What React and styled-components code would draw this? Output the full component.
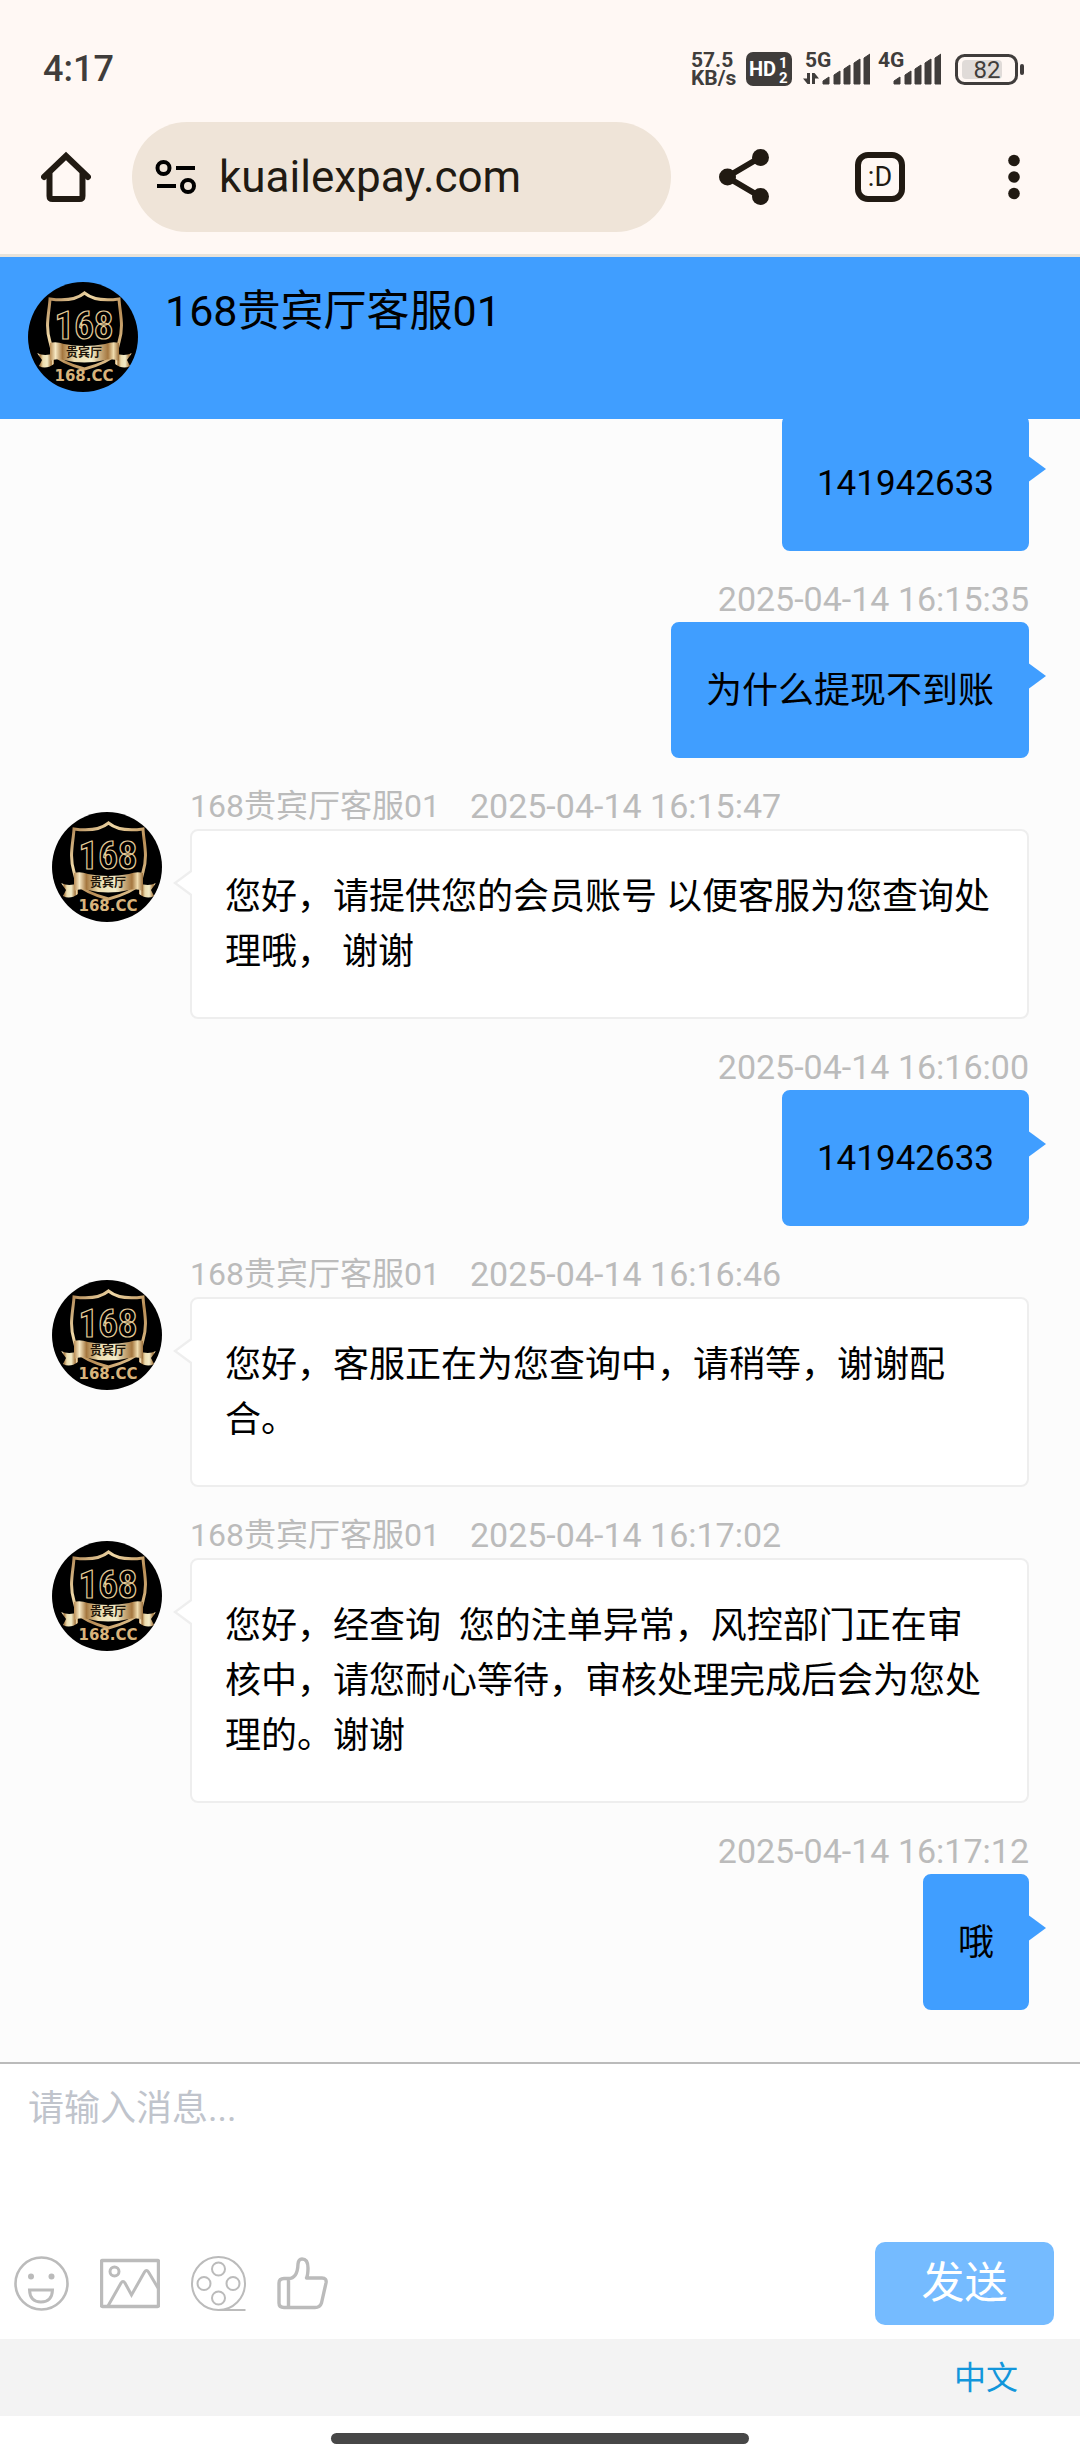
import { useState } from 'react';
import styled, { createGlobalStyle } from 'styled-components';

const GlobalStyle = createGlobalStyle`
  * {
    box-sizing: border-box;
  }
  body {
    margin: 0;
    background: #fff;
    font-family: Roboto, 'Noto Sans CJK SC', sans-serif;
  }
  button,
  input,
  textarea {
    margin: 0;
    padding: 0;
    border: none;
    outline: none;
    background: none;
    font-family: inherit;
  }
  svg {
    display: block;
    flex-shrink: 0;
  }
`;

const Page = styled.div`
  display: flex;
  flex-direction: column;
  height: 100vh;
`;

// 系统状态栏 + 浏览器地址栏
const BrowserTop = styled.header`
  flex-shrink: 0;
  background: #fff8f4;
  border-bottom: 3px solid #e8e3da;
`;
const StatusBar = styled.div`
  display: flex;
  align-items: center;
  justify-content: space-between;
  padding: 50px 56px 0 43px;
  height: 88px;
  color: #403d3b;
  .time {
    font-size: 36px;
    font-weight: 500;
    line-height: 38px;
  }
  .status {
    display: flex;
    align-items: center;
    gap: 8px;
  }
  .rate {
    width: 47px;
    font-size: 21px;
    font-weight: 700;
    line-height: 18px;
  }
`;
const Toolbar = styled.div`
  display: flex;
  align-items: center;
  padding: 34px 41px 22px;
  .actions {
    display: flex;
    gap: 84px;
    margin-left: 48px;
  }
`;
const IconButton = styled.button`
  display: flex;
  flex-shrink: 0;
  color: #211a12;
  cursor: pointer;
`;
const AddressBar = styled.label`
  flex: 1;
  min-width: 0;
  display: flex;
  align-items: center;
  gap: 22px;
  height: 110px;
  margin-left: 41px;
  padding: 0 23px;
  border-radius: 55px;
  background: #efe4d8;
  input {
    flex: 1;
    min-width: 0;
    height: 60px;
    font-size: 44px;
    color: #211a12;
  }
`;

const ChatHeader = styled.div`
  flex-shrink: 0;
  display: flex;
  align-items: flex-start;
  gap: 27px;
  padding: 25px 28px 27px;
  background: #409eff;
  h1 {
    margin: 0;
    font-size: 43px;
    font-weight: 400;
    line-height: 58px;
    color: #000;
  }
`;

// column-reverse 让列表默认停在最底部
const Scroller = styled.main`
  flex: 1;
  min-height: 0;
  display: flex;
  flex-direction: column-reverse;
  overflow-y: auto;
  scrollbar-width: none;
  background: #fcfcfc;
`;
const MessageList = styled.ul`
  display: flex;
  flex-direction: column;
  gap: 25px;
  margin: 0;
  padding: 0 51px 52px 52px;
  list-style: none;
`;
const MessageItem = styled.li`
  display: flex;
  gap: 28px;
  justify-content: ${({ $mine }) => ($mine ? 'flex-end' : 'flex-start')};
  > svg {
    margin-top: 29px;
  }
  .body {
    display: flex;
    flex-direction: column;
    align-items: ${({ $mine }) => ($mine ? 'flex-end' : 'stretch')};
    flex: ${({ $mine }) => ($mine ? 'none' : '1')};
    min-width: 0;
  }
`;
const Meta = styled.div`
  display: flex;
  align-items: center;
  gap: 30px;
  height: 46px;
  font-size: 32px;
  line-height: 46px;
  color: #bbb;
  time {
    font-size: 34px;
  }
`;
const Bubble = styled.div`
  position: relative;
  padding: 39px 33px 37px;
  border: 2px solid ${({ $mine }) => ($mine ? '#409eff' : '#eee')};
  border-radius: 8px;
  background: ${({ $mine }) => ($mine ? '#409eff' : '#fff')};
  font-size: ${({ $numeric }) => ($numeric ? '35px' : '36px')};
  line-height: ${({ $mine }) => ($mine ? '56px' : '55px')};
  white-space: pre-wrap;
  color: #000;
  &::before,
  &::after {
    content: '';
    position: absolute;
    border: 14px solid transparent;
  }
  &::before {
    top: 38px;
    ${({ $mine }) =>
      $mine
        ? 'left: 100%; border-left: 19px solid #409eff; border-right: none;'
        : 'right: 100%; border-right: 19px solid #eee; border-left: none;'}
  }
  &::after {
    display: ${({ $mine }) => ($mine ? 'none' : 'block')};
    top: 38px;
    right: calc(100% - 4px);
    border-right: 19px solid #fff;
    border-left: none;
  }
`;

const Composer = styled.form`
  flex-shrink: 0;
  border-top: 2px solid #bbb;
  background: #fff;
  textarea {
    display: block;
    width: 100%;
    height: 170px;
    padding: 17px 28px;
    font-size: 36px;
    line-height: 56px;
    color: #000;
    resize: none;
    &::placeholder {
      color: #c0c4cc;
    }
  }
`;
const Tools = styled.div`
  display: flex;
  align-items: center;
  justify-content: space-between;
  padding: 8px 26px 14px 14px;
  .icons {
    display: flex;
    align-items: center;
    gap: 31px;
  }
`;
const ToolButton = styled(IconButton)`
  color: #bbb;
`;
const SendButton = styled.button`
  width: 179px;
  height: 83px;
  border-radius: 10px;
  background: #75bbff;
  color: #fff;
  font-size: 43px;
  line-height: 83px;
  cursor: pointer;
`;
const LangBar = styled.div`
  flex-shrink: 0;
  display: flex;
  align-items: center;
  justify-content: flex-end;
  height: 77px;
  padding-right: 62px;
  background: #f3f3f3;
  a {
    font-size: 32px;
    line-height: 40px;
    color: #1296db;
    text-decoration: none;
  }
`;
const GestureBar = styled.footer`
  flex-shrink: 0;
  display: flex;
  justify-content: center;
  height: 44px;
  padding-top: 17px;
  background: #fff;
  &::before {
    content: '';
    width: 418px;
    height: 11px;
    border-radius: 6px;
    background: #474747;
  }
`;

const Avatar = () => (
  <svg width="110" height="110" viewBox="0 0 110 110" role="img" aria-label="168贵宾厅">
    <defs>
      <linearGradient id="gold" x1="0" y1="0" x2="1" y2="1">
        <stop offset="0" stopColor="#a87c4a" />
        <stop offset="0.3" stopColor="#f0d9a8" />
        <stop offset="0.6" stopColor="#b98d55" />
        <stop offset="1" stopColor="#ecd3a0" />
      </linearGradient>
      <linearGradient id="ribbon" x1="0" y1="0" x2="1" y2="0">
        <stop offset="0" stopColor="#b98d55" />
        <stop offset="0.08" stopColor="#f6e8c4" />
        <stop offset="0.18" stopColor="#a5773f" />
        <stop offset="0.35" stopColor="#ecdcae" />
        <stop offset="0.6" stopColor="#f3ecc8" />
        <stop offset="0.84" stopColor="#a5773f" />
        <stop offset="0.92" stopColor="#f0dcae" />
        <stop offset="1" stopColor="#9b6f3b" />
      </linearGradient>
    </defs>
    <circle cx="55" cy="55" r="55" fill="#000" />
    <path
      d="M56.500 11C48 18 36 19 22 17C21 32 17 44 22 60L25 72Q34 81 56.500 87Q79 81 88 72L91 60C96 44 92 32 91 17C77 19 65 18 56.500 11Z"
      fill="#000"
      stroke="url(#gold)"
      strokeWidth="3"
    />
    <path d="M9 71Q17 75 26 71V82Q18 88 11 84L14 78Z" fill="url(#ribbon)" />
    <path d="M104 71Q96 75 87 71V82Q95 88 102 84L99 78Z" fill="url(#ribbon)" />
    <path d="M22 61Q28 59 36 62Q56 66 77 62Q85 59 91 61V79Q84 76 77 78Q56 83 36 78Q28 76 22 79Z" fill="url(#ribbon)" />
    <path d="M50 81.500L56.500 84.500L63 81.500Z" fill="#000" />
    <text
      x="56"
      y="57"
      textAnchor="middle"
      fontFamily="'Liberation Sans Narrow', 'Roboto Condensed', sans-serif"
      fontWeight="700"
      fontSize="39"
      fill="#000"
      stroke="#e5cc98"
      strokeWidth="1.2"
    >
      168
    </text>
    <text x="56" y="75" textAnchor="middle" fontFamily="'Noto Sans CJK SC', sans-serif" fontWeight="700" fontSize="12" fill="#1c1408">
      贵宾厅
    </text>
    <text x="56" y="99" textAnchor="middle" fontFamily="'DejaVu Sans', sans-serif" fontWeight="700" fontSize="15" fill="#d8b47c">
      168.CC
    </text>
  </svg>
);

const bars = [
  [0, 8],
  [11, 14],
  [21, 20],
  [31, 26],
  [41, 31]
];
const Signal = ({ label, width, start, data }) => (
  <svg width={width} height="44" viewBox={`0 -4 ${width} 44`} fill="currentColor">
    <text x={data ? 5 : 0} y="16" fontSize="21" fontWeight="700">
      {label}
    </text>
    {bars.map(([x, h]) => (
      <path key={x} d={`M${start + x} 33V${38 - h}L${start + x + 6} ${34 - h}V33Z`} stroke="currentColor" strokeWidth="1" />
    ))}
    {data && <path d="M10 22V33H7.500L3 27.500H7V22ZM12 33V22H14.500L19 27.500H15V33Z" />}
  </svg>
);

const HdIcon = () => (
  <svg width="46" height="36" viewBox="0 0 46 36">
    <rect y="1" width="46" height="34" rx="7" fill="#403d3b" />
    <g fill="#fff" fontWeight="700">
      <text x="3" y="25" fontSize="20">
        HD
      </text>
      <text x="33" y="17" fontSize="15">
        1
      </text>
      <text x="33" y="32" fontSize="15">
        2
      </text>
    </g>
  </svg>
);

const Battery = () => (
  <svg width="75" height="36" viewBox="0 0 75 36">
    <rect x="7.500" y="4.500" width="60" height="28" rx="8" fill="none" stroke="#403d3b" strokeWidth="3" />
    <rect x="13" y="9" width="40" height="19" rx="4" fill="#e0dbd8" />
    <rect x="71" y="13" width="4" height="11" rx="2" fill="#403d3b" />
    <text x="38" y="27" textAnchor="middle" fontSize="24" fill="#403d3b">
      82
    </text>
  </svg>
);

const HomeIcon = () => (
  <svg width="50" height="54" viewBox="0 0 50 54" fill="none" stroke="currentColor" strokeWidth="6" strokeLinecap="round">
    <path d="M3 27L25 6L47 27" strokeLinejoin="miter" />
    <path d="M8.500 24V46Q8.500 49 11.500 49H38.500Q41.500 49 41.500 46V24" />
  </svg>
);

const SiteIcon = () => (
  <svg width="42" height="36" viewBox="0 0 42 36" fill="none" stroke="currentColor" strokeWidth="4">
    <circle cx="8.500" cy="9" r="6" />
    <path d="M21 9H40M2 27H21" />
    <circle cx="33" cy="27" r="6" />
  </svg>
);

const ShareIcon = () => (
  <svg width="50" height="56" viewBox="0 0 50 56" fill="currentColor">
    <path d="M41 8.500L8 28L41 47.500" fill="none" stroke="currentColor" strokeWidth="6" />
    <circle cx="41.500" cy="8.500" r="8.500" />
    <circle cx="8.500" cy="28" r="8.500" />
    <circle cx="41.500" cy="47.500" r="8.500" />
  </svg>
);

const TabsIcon = () => (
  <svg width="52" height="56" viewBox="0 0 52 56">
    <rect x="5" y="6" width="44" height="44" rx="10" fill="none" stroke="currentColor" strokeWidth="6" />
    <text x="27" y="37" textAnchor="middle" fontSize="27" fill="currentColor">
      :D
    </text>
  </svg>
);

const MoreIcon = () => (
  <svg width="50" height="56" viewBox="0 0 50 56" fill="currentColor">
    <circle cx="25" cy="11.500" r="5.800" />
    <circle cx="25" cy="28" r="5.800" />
    <circle cx="25" cy="44.500" r="5.800" />
  </svg>
);

const SmileIcon = () => (
  <svg width="55" height="55" viewBox="0 0 55 55" fill="none" stroke="currentColor" strokeWidth="3">
    <circle cx="27.500" cy="27.500" r="26" strokeWidth="2.600" />
    <path d="M15.500 34H38.500Q38 46 27 46Q16 46 15.500 34Z" />
    <circle cx="17" cy="20.500" r="3" fill="currentColor" stroke="none" />
    <circle cx="37.500" cy="20.500" r="3" fill="currentColor" stroke="none" />
  </svg>
);

const PictureIcon = () => (
  <svg width="60" height="55" viewBox="0 0 60 55" fill="none" stroke="currentColor" strokeWidth="3">
    <rect x="1.500" y="4.500" width="57" height="46" rx="1" strokeWidth="3.400" />
    <circle cx="14.500" cy="15.500" r="4.500" />
    <path d="M8 50L21 27Q23 24 25 27L31.500 39L44.500 16Q46.500 13 48.500 16L58 32" />
  </svg>
);

const FilmIcon = () => (
  <svg width="55" height="55" viewBox="0 0 55 55" fill="none" stroke="currentColor" strokeWidth="2">
    <circle cx="27.500" cy="27.500" r="26.500" />
    <path d="M27.500 54H54.500" />
    <circle cx="27.500" cy="13" r="6.500" />
    <circle cx="13" cy="27.500" r="6.500" />
    <circle cx="42" cy="27.500" r="6.500" />
    <circle cx="27.500" cy="42" r="6.500" />
  </svg>
);

const ThumbIcon = () => (
  <svg width="51" height="55" viewBox="0 0 51 55" fill="none" stroke="currentColor" strokeWidth="3.400" strokeLinejoin="round">
    <path d="M11.500 22.500H7Q2 22.500 2 27V47Q2 51.500 7 51.500H38Q43 51.500 44.500 47L49 27Q50 22 45 22H29.500Q31 19 31 12Q31 3 25 3Q21.500 3 21 8Q20.500 22.500 11.500 22.500V51.500" />
  </svg>
);

const agent = '168贵宾厅客服01';
const messages = [
  { id: 1, mine: true, text: '141942633' },
  { id: 2, mine: true, time: '2025-04-14 16:15:35', text: '为什么提现不到账' },
  { id: 3, time: '2025-04-14 16:15:47', text: '您好，请提供您的会员账号 以便客服为您查询处理哦， 谢谢' },
  { id: 4, mine: true, time: '2025-04-14 16:16:00', text: '141942633' },
  { id: 5, time: '2025-04-14 16:16:46', text: '您好，客服正在为您查询中，请稍等，谢谢配合。' },
  {
    id: 6,
    time: '2025-04-14 16:17:02',
    text: '您好，经查询  您的注单异常，风控部门正在审核中，请您耐心等待，审核处理完成后会为您处理的。谢谢'
  },
  { id: 7, mine: true, time: '2025-04-14 16:17:12', text: '哦' }
];

const Message = ({ mine, time, text }) => (
  <MessageItem $mine={mine}>
    {!mine && <Avatar />}
    <div className="body">
      {time && (
        <Meta>
          {!mine && <span>{agent}</span>}
          <time>{time}</time>
        </Meta>
      )}
      <Bubble $mine={mine} $numeric={/^\d+$/.test(text)}>
        {text}
      </Bubble>
    </div>
  </MessageItem>
);

export default function App() {
  const [url, setUrl] = useState('kuailexpay.com');
  const [draft, setDraft] = useState('');

  return (
    <Page>
      <GlobalStyle />
      <BrowserTop>
        <StatusBar>
          <span className="time">4:17</span>
          <div className="status">
            <div className="rate">
              57.5
              <br />
              KB/s
            </div>
            <HdIcon />
            <Signal label="5G" width={70} start={23} data />
            <Signal label="4G" width={63} start={16} />
            <Battery />
          </div>
        </StatusBar>
        <Toolbar>
          <IconButton type="button" aria-label="主页">
            <HomeIcon />
          </IconButton>
          <AddressBar>
            <SiteIcon />
            <input type="text" aria-label="网址" value={url} onChange={(e) => setUrl(e.target.value)} />
          </AddressBar>
          <div className="actions">
            <IconButton type="button" aria-label="分享">
              <ShareIcon />
            </IconButton>
            <IconButton type="button" aria-label="标签页">
              <TabsIcon />
            </IconButton>
            <IconButton type="button" aria-label="更多">
              <MoreIcon />
            </IconButton>
          </div>
        </Toolbar>
      </BrowserTop>
      <ChatHeader>
        <Avatar />
        <h1>{agent}</h1>
      </ChatHeader>
      <Scroller>
        <MessageList>
          {messages.map((item) => (
            <Message key={item.id} {...item} />
          ))}
        </MessageList>
      </Scroller>
      <Composer onSubmit={(e) => e.preventDefault()}>
        <textarea
          aria-label="消息"
          placeholder="请输入消息..."
          value={draft}
          onChange={(e) => setDraft(e.target.value)}
        />
        <Tools>
          <div className="icons">
            <ToolButton type="button" aria-label="表情">
              <SmileIcon />
            </ToolButton>
            <ToolButton type="button" aria-label="图片">
              <PictureIcon />
            </ToolButton>
            <ToolButton type="button" aria-label="视频">
              <FilmIcon />
            </ToolButton>
            <ToolButton type="button" aria-label="评价">
              <ThumbIcon />
            </ToolButton>
          </div>
          <SendButton type="submit">发送</SendButton>
        </Tools>
      </Composer>
      <LangBar>
        <a href="#lang">中文</a>
      </LangBar>
      <GestureBar />
    </Page>
  );
}
